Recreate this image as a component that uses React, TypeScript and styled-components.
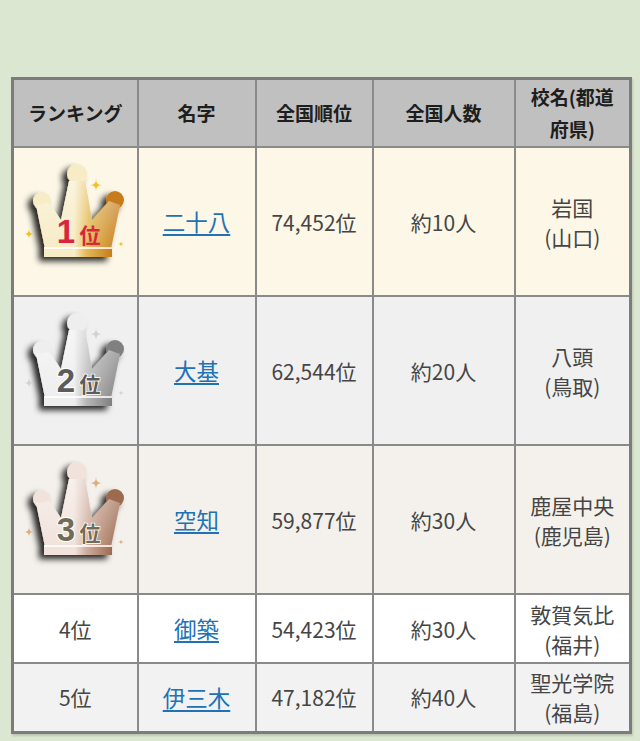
import styled, { createGlobalStyle } from "styled-components";

const GlobalStyle = createGlobalStyle`
  body {
    margin: 0;
    background: #dce7d2;
    font-family: "Noto Sans CJK JP", "Noto Sans", sans-serif;
  }
`;

const Page = styled.div`
  padding: 77px 0 0 11px;
  height: 741px;
  box-sizing: border-box;
`;

const Table = styled.table`
  width: 618px;
  border-collapse: collapse;
  border: 3px solid #7c7c7c;
  box-shadow: 1px 2px 2px rgba(0, 0, 0, 0.15);
  table-layout: fixed;
`;

const Col = styled.col<{ $w: number }>`
  width: ${(p) => p.$w}px;
`;

const HeadCell = styled.th`
  height: 66px;
  background: #c0c0c0;
  border: 2px solid #8a8a8a;
  color: #1e1e1e;
  font-size: 19px;
  font-weight: 700;
  line-height: 32px;
  padding: 0 6px;
  text-align: center;
`;

const Row = styled.tr<{ $bg: string; $h: number }>`
  background: ${(p) => p.$bg};
  height: ${(p) => p.$h}px;
`;

const Cell = styled.td`
  border: 2px solid #8a8a8a;
  color: #454545;
  font-size: 21px;
  line-height: 30px;
  text-align: center;
  padding: 0 2px;
`;

const NameLink = styled.a`
  color: #2171b5;
  font-size: 22.5px;
  text-decoration: underline;
  text-underline-offset: 3px;
`;

const CrownSvg = styled.svg`
  display: block;
  margin: 0 auto;
`;

type Palette = {
  id: string;
  light: string;
  mid: string;
  dark: string;
  num: string;
  stroke: string;
  spark: string;
};

const sparkle = (x: number, y: number, s: number) =>
  `M${x},${y - s} Q${x},${y} ${x + s},${y} Q${x},${y} ${x},${y + s} Q${x},${y} ${x - s},${y} Q${x},${y} ${x},${y - s} Z`;

const body = "M30,92 L21,48 L34,46 L46,63 L54,24 L70,24 L77,63 L94,44 L105,48 L96,92 Z";

const Crown = ({ rank, p }: { rank: number; p: Palette }) => (
  <CrownSvg width="120" height="120" viewBox="1 5 120 120">
    <defs>
      <linearGradient id={`g-${p.id}`} x1="0" y1="0" x2="1" y2="0">
        <stop offset="0" stopColor={p.light} />
        <stop offset="0.45" stopColor={p.light} />
        <stop offset="0.62" stopColor={p.mid} />
        <stop offset="1" stopColor={p.dark} />
      </linearGradient>
      <linearGradient id={`v-${p.id}`} x1="0" y1="0" x2="0" y2="1">
        <stop offset="0" stopColor="#fff" stopOpacity="0.45" />
        <stop offset="1" stopColor="#fff" stopOpacity="0" />
      </linearGradient>
      <filter id={`s-${p.id}`} x="-30%" y="-30%" width="160%" height="160%">
        <feDropShadow dx="-5" dy="4" stdDeviation="3" floodColor="#000" floodOpacity="0.85" />
      </filter>
    </defs>
    <g filter={`url(#s-${p.id})`}>
      <circle cx="27" cy="44" r="9" fill={p.light} />
      <circle cx="62" cy="17" r="10" fill={p.light} />
      <circle cx="100" cy="43" r="9" fill={p.dark} />
      <path d={body} fill={`url(#g-${p.id})`} />
      <rect x="29" y="90" width="68" height="10" fill={`url(#g-${p.id})`} />
    </g>
    <path d={body} fill={`url(#v-${p.id})`} />
    <rect x="29" y="90" width="68" height="2" fill="#fff" opacity="0.8" />
    <text
      x="51"
      y="86"
      textAnchor="middle"
      fontFamily="Liberation Sans, sans-serif"
      fontWeight="700"
      fontSize="33"
      fill={p.num}
      stroke={p.stroke}
      strokeWidth="2"
      paintOrder="stroke"
    >
      {rank}
    </text>
    <text
      x="75"
      y="86"
      textAnchor="middle"
      fontFamily="Noto Sans CJK JP, sans-serif"
      fontWeight="700"
      fontSize="21"
      fill={p.num}
      stroke={p.stroke}
      strokeWidth="1.5"
      paintOrder="stroke"
    >
      位
    </text>
    <path d={sparkle(81, 28, 6)} fill={p.spark} />
    <path d={sparkle(14, 77, 5)} fill={p.spark} />
    <path d={sparkle(106, 87, 3)} fill={p.spark} />
  </CrownSvg>
);

const palettes: Palette[] = [
  { id: "gold", light: "#f7ecc6", mid: "#e4bb57", dark: "#c67c1c", num: "#d7263d", stroke: "none", spark: "#f4c21a" },
  { id: "silver", light: "#eeeeee", mid: "#b8b8b8", dark: "#808080", num: "#5c5c5c", stroke: "#ffffff", spark: "#d2d2d2" },
  { id: "bronze", light: "#f1e3dc", mid: "#cfae9f", dark: "#9c6a50", num: "#716b57", stroke: "#ffffff", spark: "#dcb07c" },
];

type Entry = {
  rank: number;
  name: string;
  national: string;
  people: string;
  school: string;
  pref: string;
  bg: string;
  h: number;
};

const rows: Entry[] = [
  { rank: 1, name: "二十八", national: "74,452位", people: "約10人", school: "岩国", pref: "(山口)", bg: "#fcf7e7", h: 149 },
  { rank: 2, name: "大基", national: "62,544位", people: "約20人", school: "八頭", pref: "(鳥取)", bg: "#f0f0f0", h: 149 },
  { rank: 3, name: "空知", national: "59,877位", people: "約30人", school: "鹿屋中央", pref: "(鹿児島)", bg: "#f4f1ec", h: 149 },
  { rank: 4, name: "御築", national: "54,423位", people: "約30人", school: "敦賀気比", pref: "(福井)", bg: "#ffffff", h: 69 },
  { rank: 5, name: "伊三木", national: "47,182位", people: "約40人", school: "聖光学院", pref: "(福島)", bg: "#f2f2f2", h: 69 },
];

export default function App() {
  return (
    <Page>
      <GlobalStyle />
      <Table>
        <colgroup>
          <Col $w={125} />
          <Col $w={118} />
          <Col $w={117} />
          <Col $w={142} />
          <Col $w={116} />
        </colgroup>
        <thead>
          <tr>
            <HeadCell>ランキング</HeadCell>
            <HeadCell>名字</HeadCell>
            <HeadCell>全国順位</HeadCell>
            <HeadCell>全国人数</HeadCell>
            <HeadCell>校名(都道府県)</HeadCell>
          </tr>
        </thead>
        <tbody>
          {rows.map((r) => (
            <Row key={r.rank} $bg={r.bg} $h={r.h}>
              <Cell>{r.rank <= 3 ? <Crown rank={r.rank} p={palettes[r.rank - 1]} /> : `${r.rank}位`}</Cell>
              <Cell>
                <NameLink href="#">{r.name}</NameLink>
              </Cell>
              <Cell>{r.national}</Cell>
              <Cell>{r.people}</Cell>
              <Cell>
                {r.school}
                <br />
                {r.pref}
              </Cell>
            </Row>
          ))}
        </tbody>
      </Table>
    </Page>
  );
}
